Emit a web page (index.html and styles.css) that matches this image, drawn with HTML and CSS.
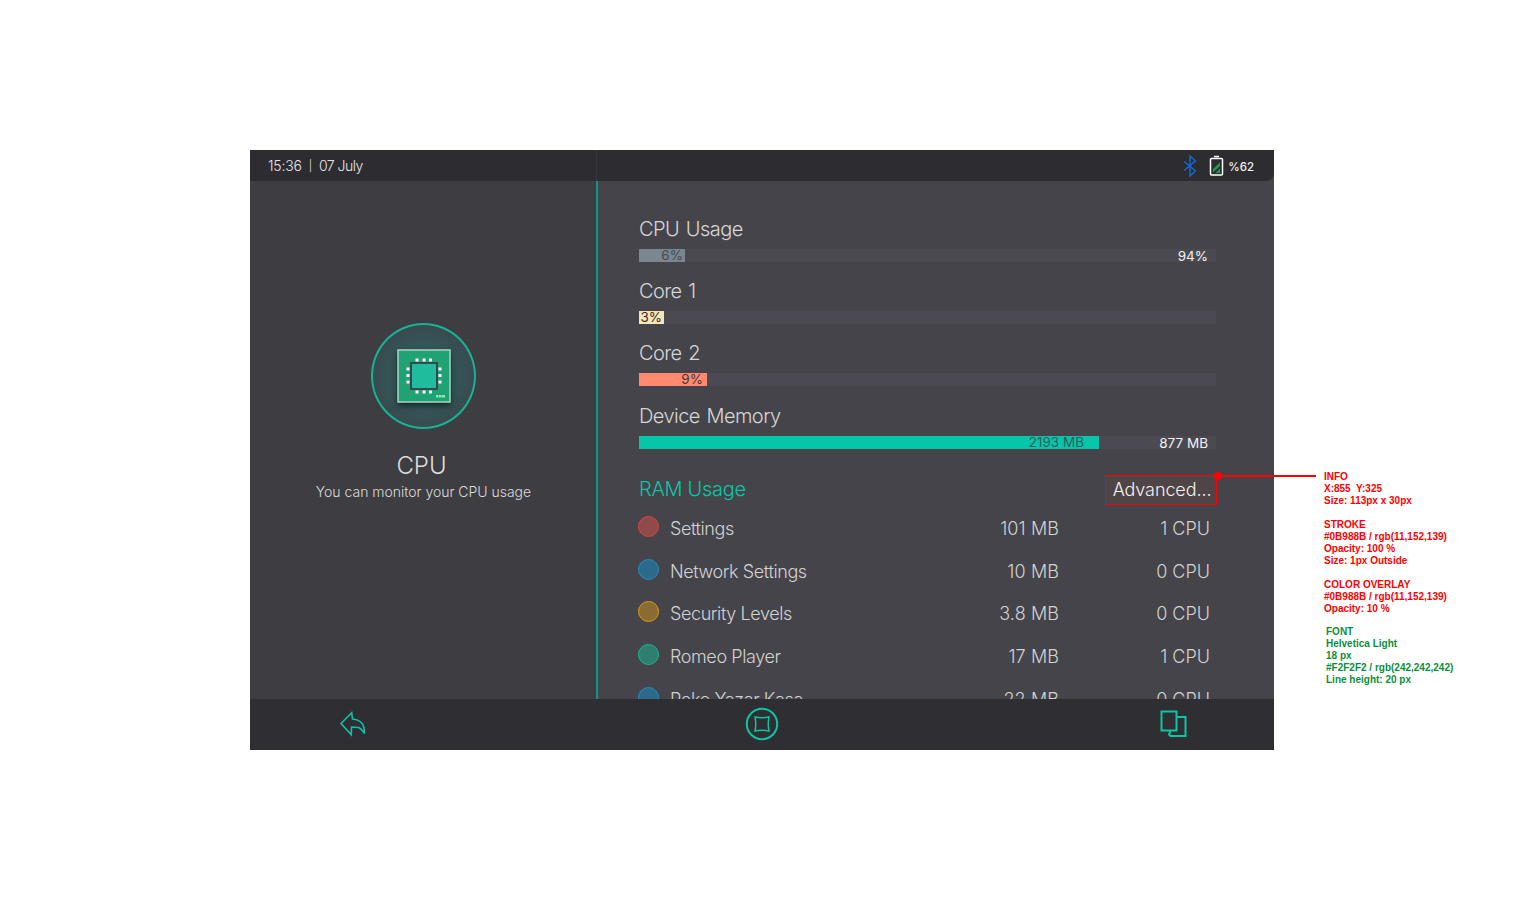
FILE: index.html
```html
<!DOCTYPE html>
<html lang="en">
<head>
<meta charset="utf-8">
<title>CPU</title>
<link rel="stylesheet" href="styles.css">
</head>
<body>
<div class="device">
  <header class="topbar">
    <div class="clock">15:36<span class="sep">|</span><span class="date">07 July</span></div>
    <div class="status">
      <svg class="bt" width="14" height="22" viewBox="0 0 14 22"><path d="M1 6.500 12.500 16 7 21V1l5.500 5L1 15.500" fill="none" stroke="#1769d6" stroke-width="1.400"/></svg>
      <svg class="battery" width="15" height="21" viewBox="0 0 15 21"><path d="M5 1.500h5M2.500 3.500h10a1 1 0 0 1 1 1V19a1 1 0 0 1-1 1h-10a1 1 0 0 1-1-1V4.500a1 1 0 0 1 1-1Z" fill="none" stroke="#fff" stroke-width="1.500"/><path d="M4 17.500V14l7-6.500v3.500ZM4.500 18h2l4.500-4.500V18Z" fill="#16a34a"/></svg>
      <span class="pct">%62</span>
    </div>
  </header>
  <main class="body">
    <aside class="side">
      <div class="badge">
        <svg class="chip" width="54" height="54" viewBox="0 0 54 54">
          <rect x="1" y="1" width="52" height="52" fill="#20a274" stroke="#a5cfbc" stroke-width="1.600"/>
          <rect x="14" y="14" width="26" height="26" fill="#1fbc9e" stroke="#37474e" stroke-width="2"/>
          <g fill="#fff">
            <rect x="18.500" y="9.500" width="3" height="3"/><rect x="25.500" y="9.500" width="3" height="3"/><rect x="32" y="9.500" width="3" height="3"/>
            <rect x="18.500" y="41.500" width="3" height="3"/><rect x="25.500" y="41.500" width="3" height="3"/><rect x="32" y="41.500" width="3" height="3"/>
            <rect x="9.500" y="18.500" width="3" height="3"/><rect x="9.500" y="25" width="3" height="3"/><rect x="9.500" y="31.500" width="3" height="3"/>
            <rect x="41.500" y="18.500" width="3" height="3"/><rect x="41.500" y="25" width="3" height="3"/><rect x="41.500" y="31.500" width="3" height="3"/>
          </g>
          <g fill="#86eeb0"><rect x="39" y="46" width="2.500" height="2.500"/><rect x="42" y="46" width="2.500" height="2.500"/><rect x="45" y="46" width="3" height="2.500"/></g>
        </svg>
      </div>
      <h1 class="side-title">CPU</h1>
      <p class="side-sub">You can monitor your CPU usage</p>
    </aside>
    <section class="panel">
      <div class="meter">
        <h2 class="meter-title">CPU Usage</h2>
        <div class="bar">
          <div class="fill fill-gray" style="width:46px">6%</div>
          <span class="rest">94%</span>
        </div>
      </div>
      <div class="meter">
        <h2 class="meter-title">Core 1</h2>
        <div class="bar"><div class="fill fill-cream" style="width:25px">3%</div></div>
      </div>
      <div class="meter meter-wide">
        <h2 class="meter-title">Core 2</h2>
        <div class="bar"><div class="fill fill-coral" style="width:68px">9%</div></div>
      </div>
      <div class="meter">
        <h2 class="meter-title">Device Memory</h2>
        <div class="bar">
          <div class="fill fill-teal" style="width:460px">2193 MB</div>
          <span class="rest">877 MB</span>
        </div>
      </div>
      <div class="ram-head">
        <h2 class="ram-title">RAM Usage</h2>
        <button class="advanced">Advanced...</button>
      </div>
      <ul class="apps">
        <li class="app"><i class="dot dot-red"></i><span class="app-name">Settings</span><span class="app-mem">101 MB</span><span class="app-cpu">1 CPU</span></li>
        <li class="app"><i class="dot dot-blue"></i><span class="app-name">Network Settings</span><span class="app-mem">10 MB</span><span class="app-cpu">0 CPU</span></li>
        <li class="app"><i class="dot dot-amber"></i><span class="app-name">Security Levels</span><span class="app-mem">3.8 MB</span><span class="app-cpu">0 CPU</span></li>
        <li class="app"><i class="dot dot-green"></i><span class="app-name">Romeo Player</span><span class="app-mem">17 MB</span><span class="app-cpu">1 CPU</span></li>
        <li class="app"><i class="dot dot-blue"></i><span class="app-name">Poke Yazar Kasa</span><span class="app-mem">22 MB</span><span class="app-cpu">0 CPU</span></li>
      </ul>
    </section>
  </main>
  <footer class="bottombar">
    <svg class="nav-back" width="28" height="26" viewBox="0 0 28 26"><path d="M2 12.500 12.700 1.800l.8 6.200c6.500.6 10.500 3.500 11.500 9l.500 5.500c-2-3-3.500-5-6-6l-7-.5-.2 7.800Z" fill="none" stroke="#0bc5a6" stroke-width="1.600" stroke-linejoin="miter"/></svg>
    <svg class="nav-home" width="34" height="34" viewBox="0 0 34 34"><circle cx="17" cy="17" r="15.200" fill="none" stroke="#0bc5a6" stroke-width="2"/><path d="M10 10q7 1.500 14 0-1.500 7 0 14-7-1.500-14 0 1.500-7 0-14Z" fill="none" stroke="#0bc5a6" stroke-width="1.500"/></svg>
    <svg class="nav-copy" width="28" height="28" viewBox="0 0 28 28"><path d="M1.500 1.500h15v19h-5.500l-3 0h-6.500ZM16.500 7h9v19h-15l-1.500-1.500 .8-1.500 .7-3" fill="none" stroke="#0bc5a6" stroke-width="2"/></svg>
  </footer>
</div>

<div class="callout-line"></div>
<div class="callout">
  <p class="note">INFO<br>X:855&nbsp; Y:325<br>Size: 113px x 30px</p>
  <p class="note">STROKE<br>#0B988B / rgb(11,152,139)<br>Opacity: 100 %<br>Size: 1px Outside</p>
  <p class="note">COLOR OVERLAY<br>#0B988B / rgb(11,152,139)<br>Opacity: 10 %</p>
  <p class="note note-font">FONT<br>Helvetica Light<br>18 px<br>#F2F2F2 / rgb(242,242,242)<br>Line height: 20 px</p>
</div>
</body>
</html>
```

FILE: styles.css
```css
* { box-sizing: border-box; }
html, body { margin: 0; padding: 0; }
body {
  background: #fff;
  width: 1524px;
  height: 900px;
  overflow: hidden;
  padding: 150px 0 0 250px;
  position: relative;
  font-family: Inter, "Liberation Sans", sans-serif;
  font-weight: 300;
}
h1, h2, p, ul { margin: 0; padding: 0; font-weight: 300; }
ul { list-style: none; }

.device {
  width: 1024px;
  height: 600px;
  background: #45444a;
  display: flex;
  flex-direction: column;
}

.topbar {
  height: 31px;
  flex: none;
  background: #2d2c31;
  border-bottom-right-radius: 8px;
  display: flex;
  align-items: center;
  justify-content: space-between;
  padding: 0 20px 0 18px;
  position: relative;
}
.topbar::after {
  content: "";
  position: absolute;
  left: 346px;
  top: 0;
  bottom: 0;
  width: 1px;
  background: #38373d;
}
.clock { font-size: 14px; color: #e6e6e6; letter-spacing: -0.2px; display: flex; align-items: center; }
.sep { font-size: 11px; margin: 0 7px; }
.date { letter-spacing: -0.5px; }
.status { display: flex; align-items: center; }
.bt { margin-right: 12px; }
.battery { margin-right: 4px; }
.pct { font-size: 11.500px; color: #f2f2f2; font-weight: 500; margin-top: 2px; }

.body {
  height: 518px;
  flex: none;
  display: flex;
  overflow: hidden;
}
.side {
  width: 348px;
  flex: none;
  background: #3e3d42;
  border-right: 2px solid #0b988b;
  display: flex;
  flex-direction: column;
  align-items: center;
  padding-top: 142px;
}
.badge {
  width: 105px;
  height: 106px;
  border-radius: 50%;
  border: 2.500px solid #17b397;
  background: radial-gradient(circle, #2f6468 0%, #345659 45%, #3e3d42 100%);
  display: flex;
  align-items: center;
  justify-content: center;
  margin-left: 1px;
}
.chip { filter: drop-shadow(0 3px 3px rgba(0, 0, 0, .55)); }
.side-title {
  font-size: 24px;
  line-height: 28px;
  color: #dcdcdc;
  margin: 23px 3px 0 0;
}
.side-sub {
  font-size: 14px;
  line-height: 18px;
  color: #dcdcdc;
  margin: 3px 0 0 1px;
  letter-spacing: -0.02px;
}

.panel {
  flex: 1;
  padding: 36px 58px 0 41px;
  min-width: 0;
}
.meter { margin-bottom: 17px; }
.meter-wide { margin-bottom: 18px; }
.meter-title {
  font-size: 20px;
  line-height: 24px;
  color: #d6d6d6;
  margin-bottom: 8px;
  letter-spacing: -0.55px;
  word-spacing: 1.500px;
}
.bar {
  height: 13px;
  background: #4b4a53;
  display: flex;
  align-items: center;
  justify-content: space-between;
  font-size: 13.500px;
}
.fill {
  height: 13px;
  line-height: 13px;
  text-align: right;
  padding-right: 2px;
  color: #36363c;
  flex: none;
  font-weight: 400;
}
.fill-gray { background: #7b8790; color: #454750; }
.fill-cream { background: #fce4b6; color: #2e2d32; }
.fill-coral { background: #ff8a70; padding-right: 4px; color: #45383a; }
.fill-teal { background: #05c6a8; color: #3a5a60; padding-right: 15px; }
.rest { color: #f2f2f2; padding-right: 8px; font-weight: 400; }

.ram-head {
  display: flex;
  align-items: center;
  justify-content: space-between;
  margin: 26px -1px 1px 0;
}
.ram-title { font-size: 20px; line-height: 24px; color: #0bc5a6; margin-top: -3px; letter-spacing: -0.3px; }
.advanced {
  width: 112px;
  height: 30px;
  background: #4f4446;
  border: 1px solid #f00;
  color: #f2f2f2;
  font: 300 18px/20px Inter, "Liberation Sans", sans-serif;
  padding: 0 0 0 2px;
  text-align: center;
  letter-spacing: -0.1px;
}

.apps { padding-top: 1px; }
.app {
  height: 42.700px;
  display: flex;
  align-items: center;
  font-size: 18px;
  color: #d2d2d2;
}
.dot {
  width: 21px;
  height: 21px;
  border-radius: 50%;
  border: 1px solid;
  margin: -4px 11px 0 -1px;
  flex: none;
}
.dot-red { border-color: #d8473f; background: #8f4a49; }
.dot-blue { border-color: #1f8fc4; background: #2b6a8b; }
.dot-amber { border-color: #e09a12; background: #8a6c33; }
.dot-green { border-color: #18b894; background: #2f7f70; }
.app-name { flex: 1; letter-spacing: -0.4px; }
.app-mem { width: 120px; text-align: right; letter-spacing: 0.1px; }
.app-cpu { width: 157px; text-align: right; padding-right: 6px; }

.bottombar {
  height: 51px;
  flex: none;
  background: #2f2e33;
  display: flex;
  align-items: center;
  padding: 0 86px 1px 89px;
  justify-content: space-between;
}
.nav-home { margin-left: -4px; }

.callout-line {
  position: absolute;
  left: 1218px;
  top: 475px;
  width: 98px;
  height: 2px;
  background: #f00;
}
.callout-line::before {
  content: "";
  position: absolute;
  left: -4px;
  top: -3px;
  width: 8px;
  height: 8px;
  border-radius: 50%;
  background: #f00;
}
.callout {
  position: absolute;
  left: 1324px;
  top: 471px;
  font: 700 10px/12px "Liberation Sans", Arial, sans-serif;
  color: #f00;
}
.note { font-weight: 700; margin-bottom: 12px; }
.note-font { color: #0a8f3c; margin-left: 2px; margin-top: -1px; }
```
